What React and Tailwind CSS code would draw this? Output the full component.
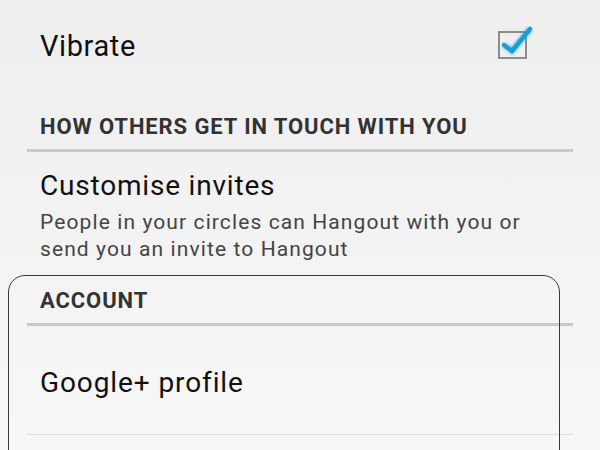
import React from "react";

const font = { fontFamily: "Roboto, 'Noto Sans', sans-serif" };

function CheckIcon() {
    return (
        <svg width="40" height="40" viewBox="0 0 40 40" className="shrink-0">
            <defs>
                <filter id="glow" x="-30%" y="-30%" width="160%" height="160%">
                    <feGaussianBlur stdDeviation="1.2" />
                </filter>
            </defs>
            <rect x="5" y="6" width="27" height="26" fill="none" stroke="#8c8c8c" strokeWidth="2" />
            <path d="M10 19 L18 25 L36 3" fill="none" stroke="#33b5e5" strokeOpacity="0.5" strokeWidth="7" filter="url(#glow)" />
            <path d="M10 19 L18 25 L36 3" fill="none" stroke="#1a9fd4" strokeWidth="4.5" strokeLinecap="round" strokeLinejoin="round" />
        </svg>
    );
}

function SectionHeader({ title }) {
    return (
        <div className="px-[27px]">
            <div className="pl-[13px] text-[22px] leading-[24px] tracking-[0.9px] font-bold text-[#333333]">{title}</div>
            <div className="mt-[10px] h-[3px] bg-[#c9c9c9]" />
        </div>
    );
}

export default function App() {
    return (
        <div className="min-h-screen w-[600px] h-[450px] overflow-hidden bg-gradient-to-b from-[#eeeeee] to-[#f7f7f7]" style={font}>
            {/* Vibrate row */}
            <div className="h-[92px] flex items-center justify-between pl-10 pr-[66px]">
                <span className="text-[29px] leading-[32px] tracking-[0.6px] text-[#111111]">Vibrate</span>
                <CheckIcon />
            </div>

            <div className="pt-[23px]">
                <SectionHeader title="HOW OTHERS GET IN TOUCH WITH YOU" />
            </div>

            {/* Customise invites */}
            <div className="pl-10 pr-[40px] pt-[18px]">
                <div className="text-[28px] leading-[32px] tracking-[0.8px] text-[#111111]">Customise invites</div>
                <div className="mt-[7px] text-[21px] leading-[27px] tracking-[1.1px] text-[#444444] whitespace-nowrap">
                    People in your circles can Hangout with you or
                    <br />
                    send you an invite to Hangout
                </div>
            </div>

            {/* Account section with outline overlay */}
            <div className="relative mt-[12px]">
                <div className="pt-[14px]">
                    <SectionHeader title="ACCOUNT" />
                </div>
                <div className="pl-10 pt-[41px] text-[28px] leading-[32px] tracking-[0.9px] text-[#111111]">Google+ profile</div>
                <div className="mx-[27px] mt-[35px] h-px bg-[#dddddd]" />
                <div className="absolute left-[8px] top-0 w-[552px] h-[240px] border border-[#3a3a3a] rounded-t-[17px] pointer-events-none" />
            </div>
        </div>
    );
}
